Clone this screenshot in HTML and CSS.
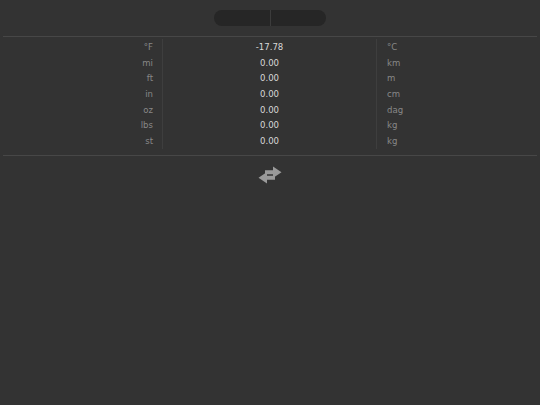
FILE: index.html
```html
<!DOCTYPE html>
<html>
<head>
<meta charset="utf-8">
<link rel="stylesheet" href="styles.css">
</head>
<body>
<div class="top">
  <div class="pill">
    <div class="seg"></div>
    <div class="divider"></div>
    <div class="seg"></div>
  </div>
</div>
<div class="rule"></div>
<div class="table">
  <div class="col from">
    <div>°F</div><div>mi</div><div>ft</div><div>in</div><div>oz</div><div>lbs</div><div>st</div>
  </div>
  <div class="col vals">
    <div>-17.78</div><div>0.00</div><div>0.00</div><div>0.00</div><div>0.00</div><div>0.00</div><div>0.00</div>
  </div>
  <div class="col to">
    <div>°C</div><div>km</div><div>m</div><div>cm</div><div>dag</div><div>kg</div><div>kg</div>
  </div>
</div>
<div class="rule tight"></div>
<div class="swap">
  <svg width="24" height="18" viewBox="0 0 24 18">
    <path d="M15 0.5 L23.5 6.25 L15 12 L15 8.25 L7 8.25 L7 4.25 L15 4.25 Z" fill="#9a9a9a"/>
    <path d="M9 6 L0.5 11.75 L9 17.5 L9 13.75 L17 13.75 L17 9.75 L9 9.75 Z" fill="#9a9a9a"/>
  </svg>
</div>
</body>
</html>
```
FILE: styles.css
```css
html, body {
  margin: 0;
  padding: 0;
  background: #333333;
  font-family: "DejaVu Sans", sans-serif;
  font-stretch: condensed;
  font-size: 9.5px;
}
.top {
  display: flex;
  justify-content: center;
  padding-top: 10px;
  height: 26px;
  box-sizing: border-box;
}
.pill {
  display: flex;
  width: 112px;
  height: 16px;
  border-radius: 8px;
  background: #262626;
  overflow: hidden;
}
.seg { flex: 1; }
.divider { width: 1px; background: #3c3c3c; }
.rule {
  height: 1px;
  background: #474747;
  margin: 10px 3px 0 3px;
}
.rule.tight { margin-top: 0; }
.table {
  display: grid;
  grid-template-columns: 160px 213px 1fr;
  align-items: start;
  margin: 0 3px;
  padding: 2px 0 6px 0;
}
.col > div {
  height: 15.67px;
  line-height: 15.67px;
}
.from {
  text-align: right;
  padding-right: 9px;
  color: #888888;
  border-right: 1px solid #3e3e3e;
}
.vals {
  text-align: center;
  color: #d8d8d8;
}
.to {
  text-align: left;
  padding-left: 10px;
  color: #888888;
  border-left: 1px solid #3e3e3e;
}
.swap {
  display: flex;
  justify-content: center;
  padding-top: 10px;
}
```
